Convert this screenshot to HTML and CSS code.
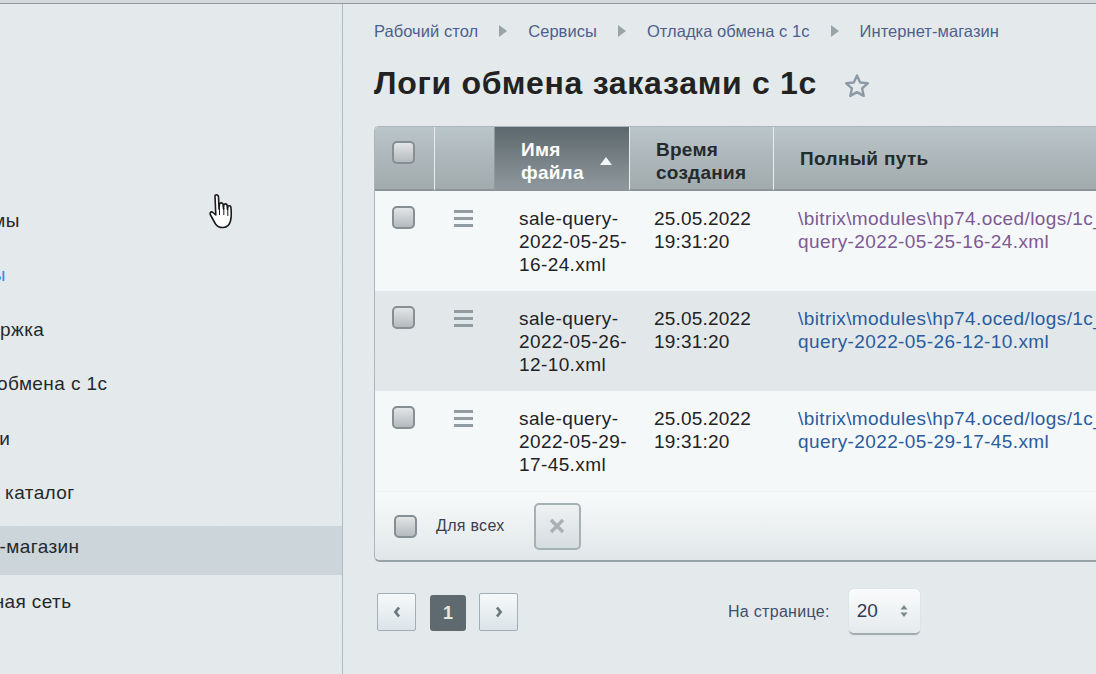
FILE: index.html
```html
<!DOCTYPE html>
<html lang="ru">
<head>
<meta charset="utf-8">
<title>Логи обмена заказами с 1с</title>
<link rel="stylesheet" href="styles.css">
</head>
<body>
<div class="topline"></div>
<div class="page">
  <aside class="sidebar">
    <nav class="menu">
      <a class="menu-item">Программы</a>
      <a class="menu-item menu-item-blue">Страницы</a>
      <a class="menu-item">Техподдержка</a>
      <a class="menu-item">Отладка обмена с 1с</a>
      <a class="menu-item">Настройки</a>
      <a class="menu-item">Торговый каталог</a>
      <a class="menu-item menu-item-active">Интернет-магазин</a>
      <a class="menu-item">Социальная сеть</a>
    </nav>
  </aside>
  <main class="main">
    <div class="crumbs">
      <a class="crumb">Рабочий стол</a><span class="crumb-arrow"></span>
      <a class="crumb">Сервисы</a><span class="crumb-arrow"></span>
      <a class="crumb">Отладка обмена с 1с</a><span class="crumb-arrow"></span>
      <a class="crumb">Интернет-магазин</a>
    </div>
    <div class="title-row">
      <h1 class="title">Логи обмена заказами с 1с</h1>
      <svg class="star" viewBox="0 0 26 26" width="26" height="26"><path d="M13 2.500l3.200 7 7.600.8-5.700 5.100 1.600 7.500L13 19.100l-6.700 3.800 1.600-7.500-5.700-5.100 7.600-.8z" fill="none" stroke="#8d9aa6" stroke-width="2.400" stroke-linejoin="round"/></svg>
    </div>
    <div class="grid-wrap">
      <table class="grid">
        <thead>
          <tr>
            <th class="col-check"><span class="check"></span></th>
            <th class="col-handle"></th>
            <th class="col-name sorted"><div class="sort-head"><span>Имя файла</span><i class="sort-arrow"></i></div></th>
            <th class="col-time"><span>Время создания</span></th>
            <th class="col-path"><span>Полный путь</span></th>
          </tr>
        </thead>
        <tbody>
          <tr>
            <td class="cell-check"><span class="check"></span></td>
            <td class="cell-handle"><span class="handle"><i></i><i></i><i></i></span></td>
            <td class="cell-name">sale-query-2022-05-25-16-24.xml</td>
            <td class="cell-time">25.05.2022 19:31:20</td>
            <td class="cell-path"><a class="visited">\bitrix\modules\hp74.oced/logs/1c_sale-query-2022-05-25-16-24.xml</a></td>
          </tr>
          <tr class="alt">
            <td class="cell-check"><span class="check"></span></td>
            <td class="cell-handle"><span class="handle"><i></i><i></i><i></i></span></td>
            <td class="cell-name">sale-query-2022-05-26-12-10.xml</td>
            <td class="cell-time">25.05.2022 19:31:20</td>
            <td class="cell-path"><a>\bitrix\modules\hp74.oced/logs/1c_sale-query-2022-05-26-12-10.xml</a></td>
          </tr>
          <tr>
            <td class="cell-check"><span class="check"></span></td>
            <td class="cell-handle"><span class="handle"><i></i><i></i><i></i></span></td>
            <td class="cell-name">sale-query-2022-05-29-17-45.xml</td>
            <td class="cell-time">25.05.2022 19:31:20</td>
            <td class="cell-path"><a>\bitrix\modules\hp74.oced/logs/1c_sale-query-2022-05-29-17-45.xml</a></td>
          </tr>
        </tbody>
      </table>
      <div class="grid-foot">
        <span class="check"></span>
        <span class="for-all">Для всех</span>
        <button class="del-btn"><svg viewBox="0 0 16 16" width="16" height="16"><path d="M2 2l12 12M14 2L2 14" stroke="#a9b1b4" stroke-width="3.400"/></svg></button>
      </div>
    </div>
    <div class="pager-row">
      <div class="pager">
        <a class="page-btn"><svg viewBox="0 0 8 12" width="8" height="12"><path d="M6 1.500L2.500 6 6 10.500" fill="none" stroke="#6c777c" stroke-width="2.800"/></svg></a>
        <a class="page-num">1</a>
        <a class="page-btn"><svg viewBox="0 0 8 12" width="8" height="12"><path d="M2 1.500L5.500 6 2 10.500" fill="none" stroke="#6c777c" stroke-width="2.800"/></svg></a>
      </div>
      <div class="per-page">
        <span class="per-label">На странице:</span>
        <div class="select"><span>20</span><svg viewBox="0 0 8 14" width="8" height="14"><path d="M4 1l3.500 4.500h-7zM4 13L.5 8.500h7z" fill="#7d888d"/></svg></div>
      </div>
    </div>
  </main>
</div>
<svg class="cursor" viewBox="0 0 26 38" width="26" height="38"><path d="M6 2.500c1.500-1.500 3.500-.5 3.500 1.500l.5 12 .5-5c.5-1.500 3-1.500 3.500 0l.5 5 .3-4c.5-1.500 3-1.500 3.300 0l.4 4.500.4-3c.5-1.200 2.800-1 3 .5.500 5 .6 10-.4 14-.8 3-2.800 6-7 6.500-3.500.4-6-1-8-3.500L1.500 22c-1-1.500 0-3.500 1.800-3l3.500 3z" fill="#fff" stroke="#1c1c1c" stroke-width="1.600" stroke-linejoin="round"/><path d="M10.500 15v7M14.800 15v7M18.800 16v7" stroke="#1c1c1c" stroke-width="1"/></svg>
</body>
</html>
```
FILE: styles.css
```css
* { box-sizing: border-box; }
html, body { margin: 0; padding: 0; height: 100%; overflow: hidden; }
body {
  background-color: #e3e9eb;
  background-image: url("data:image/svg+xml,%3Csvg xmlns='http://www.w3.org/2000/svg' width='200' height='200'%3E%3Cfilter id='n'%3E%3CfeTurbulence type='fractalNoise' baseFrequency='.55' numOctaves='2' stitchTiles='stitch'/%3E%3CfeColorMatrix values='0 0 0 0 1 0 0 0 0 1 0 0 0 0 1 .5 0 0 0 0'/%3E%3C/filter%3E%3Crect width='200' height='200' filter='url(%23n)' opacity='.12'/%3E%3C/svg%3E");
  font-family: "Liberation Sans", Arial, sans-serif;
  color: #1f1f1f;
  position: relative;
}
.topline { height: 4px; background: linear-gradient(#d3d9db 0, #d3d9db 3px, #8f9a9e 3px, #8f9a9e 4px); }
.page { display: flex; height: 670px; }
.sidebar { width: 343px; flex: none; border-right: 1px solid #a9bccf; overflow: hidden; }
.menu { padding-top: 189.500px; margin-left: -86.500px; width: 429.500px; display: flex; flex-direction: column; }
.menu-item { height: 54.500px; line-height: 54px; font-size: 19px; letter-spacing: .4px; color: #24292c; }
.menu-item-blue { color: #2f8fe0; }
.menu-item-active { background: #ccd5da; height: 49px; line-height: 42px; margin-top: 5.500px; }
.main { flex: 1; min-width: 0; padding-left: 31px; overflow: hidden; }
.crumbs { display: flex; align-items: center; height: 22px; margin-top: 16px; white-space: nowrap; font-size: 16.500px; letter-spacing: .05px; color: #4e5f8c; }
.crumb-arrow { width: 0; height: 0; margin: 0 21px; border-left: 8px solid #98a4a8; border-top: 6px solid transparent; border-bottom: 6px solid transparent; }
.title-row { display: flex; align-items: center; margin-top: 17px; height: 48px; white-space: nowrap; }
.title { margin: 0; font-size: 32px; letter-spacing: .7px; font-weight: bold; color: #222; line-height: 48px; }
.star { margin-left: 27px; margin-top: 6px; }
.grid-wrap { margin-top: 19px; width: 900px; border: 1px solid #a9b6bb; border-width: 1px 0 2px 1px; border-bottom-color: #96a3a7; border-radius: 5px 0 0 6px; overflow: hidden; }
.grid { border-collapse: separate; border-spacing: 0; table-layout: fixed; width: 899px; font-size: 19px; line-height: 23px; letter-spacing: .4px; }
.grid th { height: 64px; padding: 0 0 0 26px; font-weight: bold; letter-spacing: .25px; text-align: left; color: #252a2c; background: linear-gradient(#bac5ca, #a1aaac); border-right: 1px solid #e9edee; border-bottom: 2px solid #8a9497; vertical-align: middle; }
.grid .col-check { width: 60px; padding: 0 0 0 17px; vertical-align: top; padding-top: 14px; }
.grid .col-handle { width: 60px; padding: 0; border-right: 1px solid #8d999d; }
.grid .col-name { width: 135px; padding-top: 6px; }
.grid .col-time { width: 144px; padding-top: 6px; }
.grid .col-path { width: 500px; border-right: 0; letter-spacing: .35px; }
.grid th.sorted { color: #fff; background: linear-gradient(#5d686e, #8e989d); }
.sort-head { display: flex; align-items: center; }
.sort-head span { width: 76px; }
.sort-arrow { margin-left: 3px; margin-top: -1px; width: 0; height: 0; border-left: 6.500px solid transparent; border-right: 6.500px solid transparent; border-bottom: 8px solid #f4f6f7; }
.grid td { height: 100px; padding: 16px 0 0 24px; vertical-align: top; background: #f5f8f9; color: #1e2326; }
.grid tr.alt td { background: #e2e8ea; }
.grid td.cell-check { padding: 15px 0 0 17px; }
.grid td.cell-handle { padding: 19px 0 0 19px; }
.grid td.cell-time { letter-spacing: .2px; }
.grid td.cell-path { padding-right: 105px; }
.cell-path a { color: #2b5c9e; }
.cell-path a.visited { color: #7d5a94; }
.check { display: block; width: 23px; height: 23px; border: 2px solid #858f94; border-radius: 5px; background: linear-gradient(#e3e5e6, #b4babd); }
.handle { display: flex; flex-direction: column; gap: 4px; width: 19px; }
.handle i { height: 3px; background: #909ca1; display: block; }
.grid-foot { height: 69px; display: flex; align-items: center; padding-left: 19px; background: linear-gradient(#f8fafa, #e1e7e9); border-top: 1px solid #eef1f2; }
.for-all { font-size: 16px; letter-spacing: .3px; color: #3a3f4c; margin-left: 19px; }
.del-btn { width: 47px; height: 47px; margin-left: 29px; padding: 0; border: 2px solid #a6b1b4; border-radius: 5px; background: linear-gradient(#eef1f2, #d6dde0); display: flex; align-items: center; justify-content: center; }
.pager-row { display: flex; align-items: center; width: 900px; margin-top: 27px; }
.pager { display: flex; align-items: center; margin-left: 3px; }
.page-btn { width: 39px; height: 38px; border: 1px solid #a2b0b5; border-radius: 2px; background: linear-gradient(#f6f9fa, #dbe4e8); display: flex; align-items: center; justify-content: center; }
.page-num { width: 36px; height: 36px; margin: 2px 13px 0 14px; background: #5f6a70; border-radius: 3px; color: #e9e6df; font-weight: bold; font-size: 18px; line-height: 36px; text-align: center; }
.per-page { display: flex; align-items: center; margin-left: 210px; }
.per-label { font-size: 16px; letter-spacing: .3px; color: #3c5068; }
.select { width: 71px; height: 46px; margin-left: 19px; border-radius: 5px; background: linear-gradient(#fafbfc, #e5eaec); border-bottom: 2px solid #a2abae; box-shadow: 0 0 1px #aab3b6; display: flex; align-items: center; justify-content: space-between; padding: 0 12px 0 8px; font-size: 19px; color: #333a55; }
.cursor { position: absolute; left: 209px; top: 193px; }
```
